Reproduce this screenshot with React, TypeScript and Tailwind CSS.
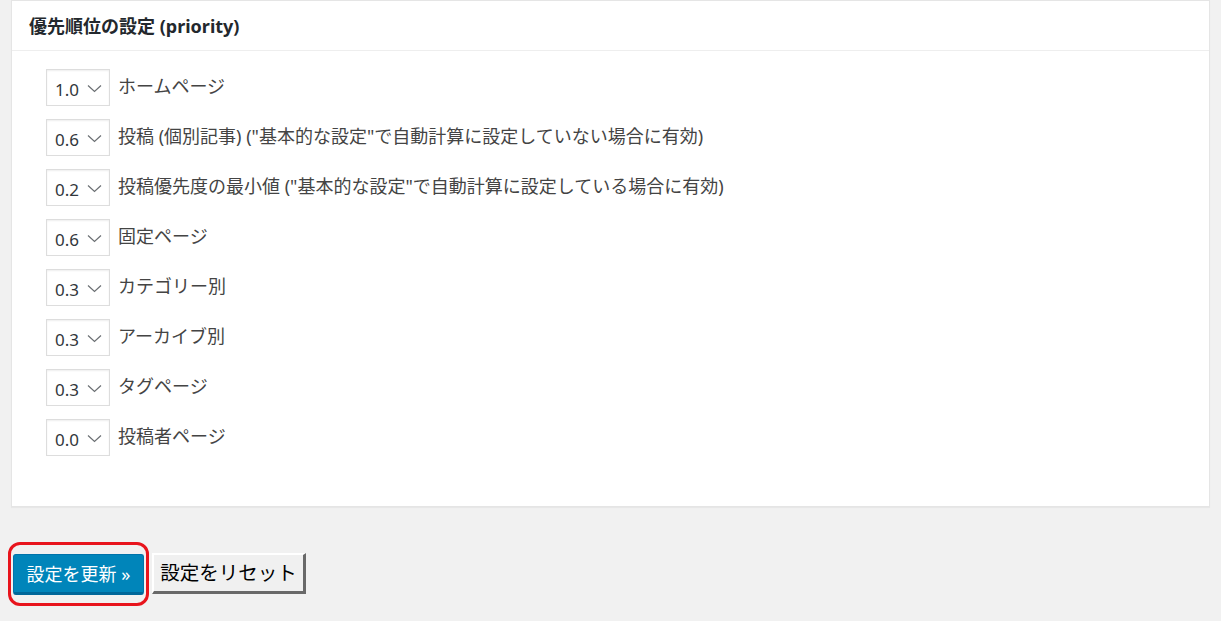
import React from "react";

const rows: [string, string][] = [
  ["1.0", "ホームページ"],
  ["0.6", "投稿 (個別記事) (\"基本的な設定\"で自動計算に設定していない場合に有効)"],
  ["0.2", "投稿優先度の最小値 (\"基本的な設定\"で自動計算に設定している場合に有効)"],
  ["0.6", "固定ページ"],
  ["0.3", "カテゴリー別"],
  ["0.3", "アーカイブ別"],
  ["0.3", "タグページ"],
  ["0.0", "投稿者ページ"],
];

function Chevron() {
  return (
    <svg width="15" height="9" viewBox="0 0 15 9" fill="none" className="ml-[8px] mt-[1px]">
      <path d="M1 1.5 L7.5 7.5 L14 1.5" stroke="#6b6f73" strokeWidth="1.2" />
    </svg>
  );
}

export default function App() {
  return (
    <div
      className="w-[1221px] h-[621px] bg-[#f1f1f1] overflow-hidden"
      style={{ fontFamily: '"Noto Sans", "Noto Sans CJK JP", sans-serif' }}
    >
      <div className="ml-[11px] w-[1199px] bg-white border border-[#e5e5e5] shadow-[0_1px_1px_rgba(0,0,0,0.04)]">
        <div className="h-[50px] border-b border-[#eeeeee] flex items-center pl-[17px]">
          <span className="text-[18px] font-bold text-[#23282d] leading-none">優先順位の設定 (priority)</span>
        </div>
        <div className="pt-[18px] pb-[50px] pl-[34px] flex flex-col gap-[13px]">
          {rows.map(([v, label], i) => (
            <div key={i} className="flex items-center h-[37px]">
              <div className="w-[64px] h-[37px] border border-[#dddddd] bg-white flex items-center pl-[8px] shadow-[inset_0_1px_2px_rgba(0,0,0,0.07)]">
                <span className="text-[17px] text-[#32373c] leading-none mt-[3px]">{v}</span>
                <Chevron />
              </div>
              <span className="ml-[8px] text-[18px] text-[#444444] leading-none -mt-[3px]">{label}</span>
            </div>
          ))}
        </div>
      </div>
      <div className="mt-[35px] ml-[8px] flex items-start">
        <div className="rounded-[12px] border-[3px] border-[#e8141c] w-[141px] h-[64px] flex items-center justify-center">
          <div className="w-[131px] h-[41px] rounded-[3px] bg-[#0085ba] border border-[#0073aa] border-b-[3px] border-b-[#006799] flex items-center justify-center mt-[1px]">
            <span className="text-[18px] text-white leading-none">設定を更新 »</span>
          </div>
        </div>
        <div className="ml-[3px] mt-[11px] w-[154px] h-[41px] bg-[#f0f0f0] border-t-2 border-l-2 border-t-white border-l-white border-r-[3px] border-b-[3px] border-r-[#696969] border-b-[#696969] flex items-center justify-center">
          <span className="text-[19.5px] text-black leading-none">設定をリセット</span>
        </div>
      </div>
    </div>
  );
}
